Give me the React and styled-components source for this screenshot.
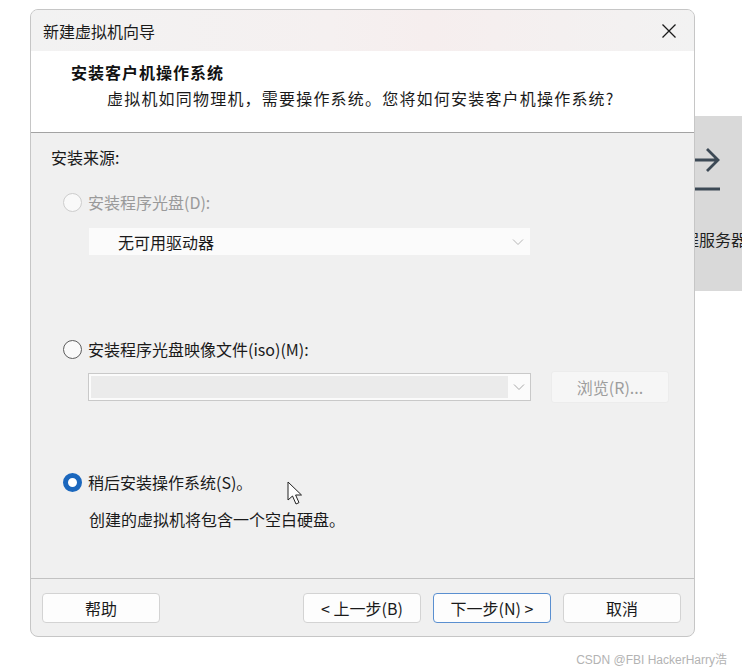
import React from 'react'
import styled, { createGlobalStyle } from 'styled-components'

const Global = createGlobalStyle`
  html, body {
    margin: 0;
    padding: 0;
    background: #ffffff;
  }
  * {
    box-sizing: border-box;
  }
`

const FONT = `"Noto Sans CJK SC", "Noto Sans", "Liberation Sans", sans-serif`

const Page = styled.div`
  position: relative;
  width: 742px;
  height: 671px;
  padding: 9px 0 0 30px;
  font-family: ${FONT};
  overflow: hidden;
`

const BackPanel = styled.div`
  position: absolute;
  left: 680px;
  top: 116px;
  width: 70px;
  height: 175px;
  background: #d9d9d9;
  padding: 30px 0 0 15px;
  display: flex;
  flex-direction: column;
  z-index: 0;
`

const PanelText = styled.div`
  margin: 31px 0 0 -12px;
  font-size: 16px;
  color: #1f1f1f;
  white-space: nowrap;
`

const Window = styled.div`
  position: relative;
  z-index: 1;
  width: 665px;
  height: 628px;
  border: 1px solid #c6c6c6;
  border-radius: 8px;
  overflow: hidden;
  display: flex;
  flex-direction: column;
  background: #f0f0f0;
`

const TitleBar = styled.div`
  height: 41px;
  flex-shrink: 0;
  display: flex;
  align-items: center;
  justify-content: space-between;
  padding: 0 14px 0 12px;
  background: linear-gradient(90deg, #f2f2f2 0%, #f5f0f0 45%, #f6eeee 60%, #f2f2f2 100%);
  font-size: 16px;
  color: #1a1a1a;
`

const CloseBtn = styled.div`
  width: 22px;
  height: 22px;
  display: flex;
  align-items: center;
  justify-content: center;
`

const Header = styled.div`
  height: 82px;
  flex-shrink: 0;
  background: #ffffff;
  border-bottom: 1px solid #a3a3a3;
  padding: 10px 0 0 40px;
`

const Heading = styled.div`
  font-size: 16px;
  font-weight: 700;
  color: #111;
  line-height: 22px;
  letter-spacing: 1px;
`

const SubText = styled.div`
  margin: 4px 0 0 36px;
  font-size: 16px;
  line-height: 22px;
  color: #1a1a1a;
  letter-spacing: 1.2px;
`

const Body = styled.div`
  flex: 1;
  position: relative;
  padding: 13px 0 0 20px;
  border-bottom: 1px solid #c2c2c2;
`

const Label = styled.div`
  font-size: 16px;
  line-height: 22px;
  color: #1a1a1a;
`

const RadioRow = styled.div`
  display: flex;
  align-items: center;
  gap: 6px;
  margin: ${p => p.$mt}px 0 0 12px;
  font-size: 16px;
  line-height: 22px;
  color: ${p => (p.$disabled ? '#9a9a9a' : '#1a1a1a')};
`

const Radio = styled.span`
  width: 19px;
  height: 19px;
  border-radius: 50%;
  flex-shrink: 0;
  background: ${p => (p.$checked ? '#ffffff' : '#f9f9f9')};
  border: ${p =>
    p.$checked ? '5.5px solid #1b67bd' : p.$disabled ? '1px solid #cdcdcd' : '1px solid #5c5c5c'};
`

const Select = styled.div`
  width: 441px;
  height: 27px;
  margin: 15px 0 0 38px;
  display: flex;
  align-items: center;
  justify-content: space-between;
  padding: 0 6px 0 29px;
  background: #fbfbfb;
  font-size: 16px;
  color: #1a1a1a;
`

const FileRow = styled.div`
  display: flex;
  align-items: center;
  gap: 20px;
  margin: 11px 0 0 37px;
`

const Combo = styled.div`
  width: 443px;
  height: 28px;
  border: 1px solid #c9c9c9;
  background: #fbfbfb;
  display: flex;
  align-items: stretch;
  padding: 2px 0 2px 2px;
`

const ComboField = styled.div`
  flex: 1;
  background: #ebebeb;
`

const ComboArrow = styled.div`
  width: 22px;
  display: flex;
  align-items: center;
  justify-content: center;
`

const BrowseBtn = styled.div`
  width: 118px;
  height: 32px;
  border-radius: 3px;
  background: #f6f6f6;
  border: 1px solid #ececec;
  display: flex;
  align-items: center;
  justify-content: center;
  font-size: 16px;
  color: #9d9d9d;
`

const Desc = styled.div`
  margin: 15px 0 0 38px;
  font-size: 16px;
  line-height: 22px;
  color: #1a1a1a;
`

const Cursor = styled.svg`
  position: absolute;
  left: 256px;
  top: 348px;
`

const Footer = styled.div`
  height: 57px;
  flex-shrink: 0;
  display: flex;
  align-items: flex-start;
  padding: 14px 13px 0 11px;
  gap: 12px;
`

const Spacer = styled.div`
  flex: 1;
`

const Button = styled.div`
  width: 118px;
  height: 30px;
  border-radius: 4px;
  background: #fdfdfd;
  border: 1px solid ${p => (p.$primary ? '#5a8fd0' : '#d3d3d3')};
  display: flex;
  align-items: center;
  justify-content: center;
  font-size: 16px;
  color: #1a1a1a;
`

const Watermark = styled.div`
  display: flex;
  justify-content: flex-end;
  padding: 13px 15px 0 0;
  font-size: 12px;
  color: #b3b3b3;
  font-family: "Liberation Sans", "Noto Sans CJK SC", sans-serif;
`

const Chevron = ({ color }) => (
  <svg width="12" height="8" viewBox="0 0 12 8">
    <path d="M1 1.5 L6 6.5 L11 1.5" fill="none" stroke={color} strokeWidth="1" />
  </svg>
)

export default function App() {
  return (
    <>
      <Global />
      <Page>
        <BackPanel>
          <svg width="30" height="50" viewBox="0 0 30 50">
            <path d="M0 14 H23 M12 3 L23 14 L12 25" fill="none" stroke="#3c4955" strokeWidth="2.8" />
            <path d="M0 43 H25" stroke="#3c4955" strokeWidth="3" />
          </svg>
          <PanelText>程服务器</PanelText>
        </BackPanel>
        <Window>
          <TitleBar>
            <span>新建虚拟机向导</span>
            <CloseBtn>
              <svg width="16" height="16" viewBox="0 0 16 16">
                <path d="M1.5 1.5 L14.5 14.5 M14.5 1.5 L1.5 14.5" stroke="#1a1a1a" strokeWidth="1.3" />
              </svg>
            </CloseBtn>
          </TitleBar>
          <Header>
            <Heading>安装客户机操作系统</Heading>
            <SubText>虚拟机如同物理机，需要操作系统。您将如何安装客户机操作系统?</SubText>
          </Header>
          <Body>
            <Label>安装来源:</Label>
            <RadioRow $mt={23} $disabled>
              <Radio $disabled />
              安装程序光盘(D):
            </RadioRow>
            <Select>
              <span>无可用驱动器</span>
              <Chevron color="#b5b5b5" />
            </Select>
            <RadioRow $mt={83}>
              <Radio />
              安装程序光盘映像文件(iso)(M):
            </RadioRow>
            <FileRow>
              <Combo>
                <ComboField />
                <ComboArrow>
                  <Chevron color="#a8a8a8" />
                </ComboArrow>
              </Combo>
              <BrowseBtn>浏览(R)...</BrowseBtn>
            </FileRow>
            <RadioRow $mt={68}>
              <Radio $checked />
              稍后安装操作系统(S)。
            </RadioRow>
            <Desc>创建的虚拟机将包含一个空白硬盘。</Desc>
            <Cursor width="18" height="26" viewBox="0 0 18 26">
              <path d="M1 1 L1 19 L5.5 15 L9 23 L12 21.6 L8.6 14 L14.5 14 Z" fill="#ffffff" stroke="#222" strokeWidth="1" strokeLinejoin="round" />
            </Cursor>
          </Body>
          <Footer>
            <Button>帮助</Button>
            <Spacer />
            <Button>&lt; 上一步(B)</Button>
            <Button $primary>下一步(N) &gt;</Button>
            <Button>取消</Button>
          </Footer>
        </Window>
        <Watermark>CSDN @FBI HackerHarry浩</Watermark>
      </Page>
    </>
  )
}
